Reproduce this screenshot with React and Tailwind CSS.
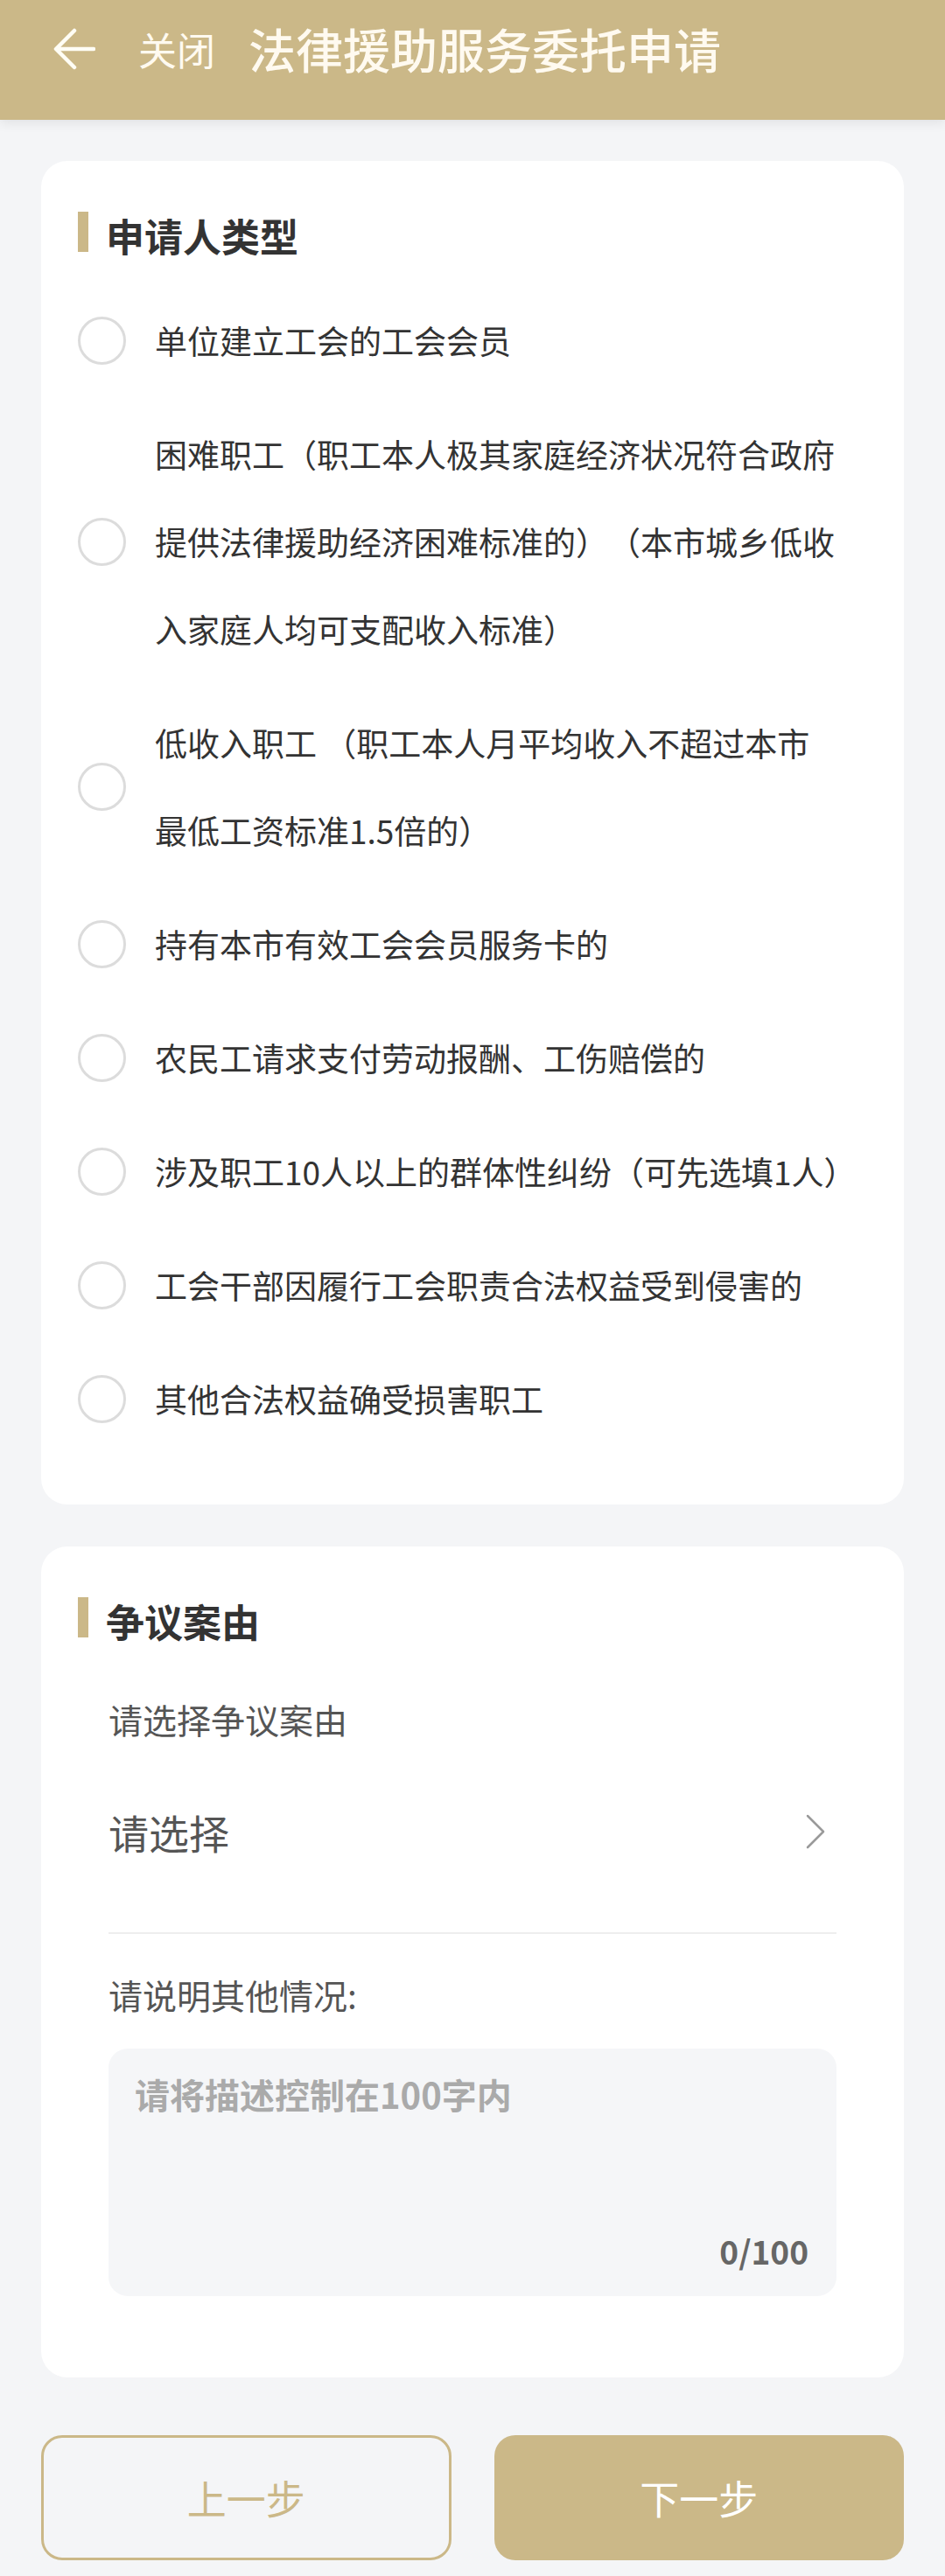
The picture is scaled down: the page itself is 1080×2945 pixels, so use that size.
import React from 'react';

const options = [
    ['单位建立工会的工会会员'],
    [
        '困难职工（职工本人极其家庭经济状况符合政府',
        '提供法律援助经济困难标准的）（本市城乡低收',
        '入家庭人均可支配收入标准）',
    ],
    ['低收入职工 （职工本人月平均收入不超过本市', '最低工资标准1.5倍的）'],
    ['持有本市有效工会会员服务卡的'],
    ['农民工请求支付劳动报酬、工伤赔偿的'],
    ['涉及职工10人以上的群体性纠纷（可先选填1人）'],
    ['工会干部因履行工会职责合法权益受到侵害的'],
    ['其他合法权益确受损害职工'],
];

const SectionTitle = ({ children }) => (
    <div className="flex items-center h-[46px]">
        <span className="block w-[12px] h-[46px] bg-[#cbb888]" />
        <h2 className="ml-[20px] text-[44px] leading-[46px] font-bold text-[#333333] mt-[8px]">{children}</h2>
    </div>
);

const Radio = () => (
    <span className="block shrink-0 w-[55px] h-[55px] rounded-full border-[3px] border-[#dcdcdc] bg-white" />
);

const App = () => {
    return (
        <div
            className="w-[1080px] min-h-[2945px] bg-[#f4f5f7] flex flex-col [text-spacing-trim:space-all]"
            style={{ fontFamily: '"Noto Sans CJK SC", "Noto Sans", sans-serif' }}
        >
            <header className="h-[137px] bg-[#cbb888] shadow-[0_4px_12px_rgba(0,0,0,0.08)] flex items-center pb-[25px] pl-[61px]">
                <svg width="48" height="48" viewBox="0 0 48 48" fill="none" className="shrink-0">
                    <path
                        d="M46 24H4M24 3 3 24l21 21"
                        stroke="#fffdf5"
                        strokeWidth="4.5"
                        strokeLinecap="round"
                        strokeLinejoin="round"
                    />
                </svg>
                <span className="ml-[49px] text-[44px] leading-none text-[#fffaf0] font-normal">关闭</span>
                <h1 className="ml-[38px] text-[54px] leading-none text-[#fffaf0] font-medium">法律援助服务委托申请</h1>
            </header>

            <main className="px-[47px] pt-[47px] pb-[18px] flex flex-col">
                <section className="bg-white rounded-[30px] pl-[42px] pr-[40px] pt-[58px] pb-[71px]">
                    <SectionTitle>申请人类型</SectionTitle>
                    <div className="mt-[51px] flex flex-col gap-[30px]">
                        {options.map((lines, i) => (
                            <label key={i} className="flex items-center gap-[33px]">
                                <Radio />
                                <span className="flex flex-col text-[37px] leading-[100px] text-[#333333]">
                                    {lines.map((l, j) => (
                                        <span key={j} className="whitespace-pre">
                                            {l}
                                        </span>
                                    ))}
                                </span>
                            </label>
                        ))}
                    </div>
                </section>

                <section className="mt-[48px] bg-white rounded-[30px] px-[42px] pt-[58px] pb-[93px]">
                    <SectionTitle>争议案由</SectionTitle>
                    <div className="px-[35px]">
                        <p className="mt-[63px] text-[39px] leading-[60px] text-[#555555]">请选择争议案由</p>
                        <div className="pt-[39px] pb-[55px] border-b-2 border-[#eeeeee] flex items-center justify-between h-[216px]">
                            <span className="text-[46px] leading-[120px] text-[#555555]">请选择</span>
                            <svg width="22" height="40" viewBox="0 0 22 40" fill="none" className="mr-[13px]">
                                <path d="M2 2l18 18L2 38" stroke="#9a9a9a" strokeWidth="2.5" strokeLinecap="round" strokeLinejoin="round" />
                            </svg>
                        </div>
                        <p className="mt-[39px] text-[39px] leading-[60px] text-[#555555]">请说明其他情况:</p>
                        <div className="mt-[32px] h-[283px] rounded-[22px] bg-[#f5f6f8] flex flex-col justify-between pt-[27px] pb-[29px] pl-[30px] pr-[32px]">
                            <span className="text-[40px] leading-[50px] font-bold text-[#aaaaaa]">请将描述控制在100字内</span>
                            <span className="self-end text-[37px] leading-[46px] font-bold text-[#666666]">0/100</span>
                        </div>
                    </div>
                </section>

                <div className="mt-[66px] grid grid-cols-2 gap-[49px]">
                    <button className="h-[143px] rounded-[24px] border-[3px] border-[#cbb888] bg-[#f4f5f7] text-[45px] text-[#cbb888]">
                        上一步
                    </button>
                    <button className="h-[143px] rounded-[24px] bg-[#cbb888] text-[45px] text-white">下一步</button>
                </div>
            </main>
        </div>
    );
};

export default App;
